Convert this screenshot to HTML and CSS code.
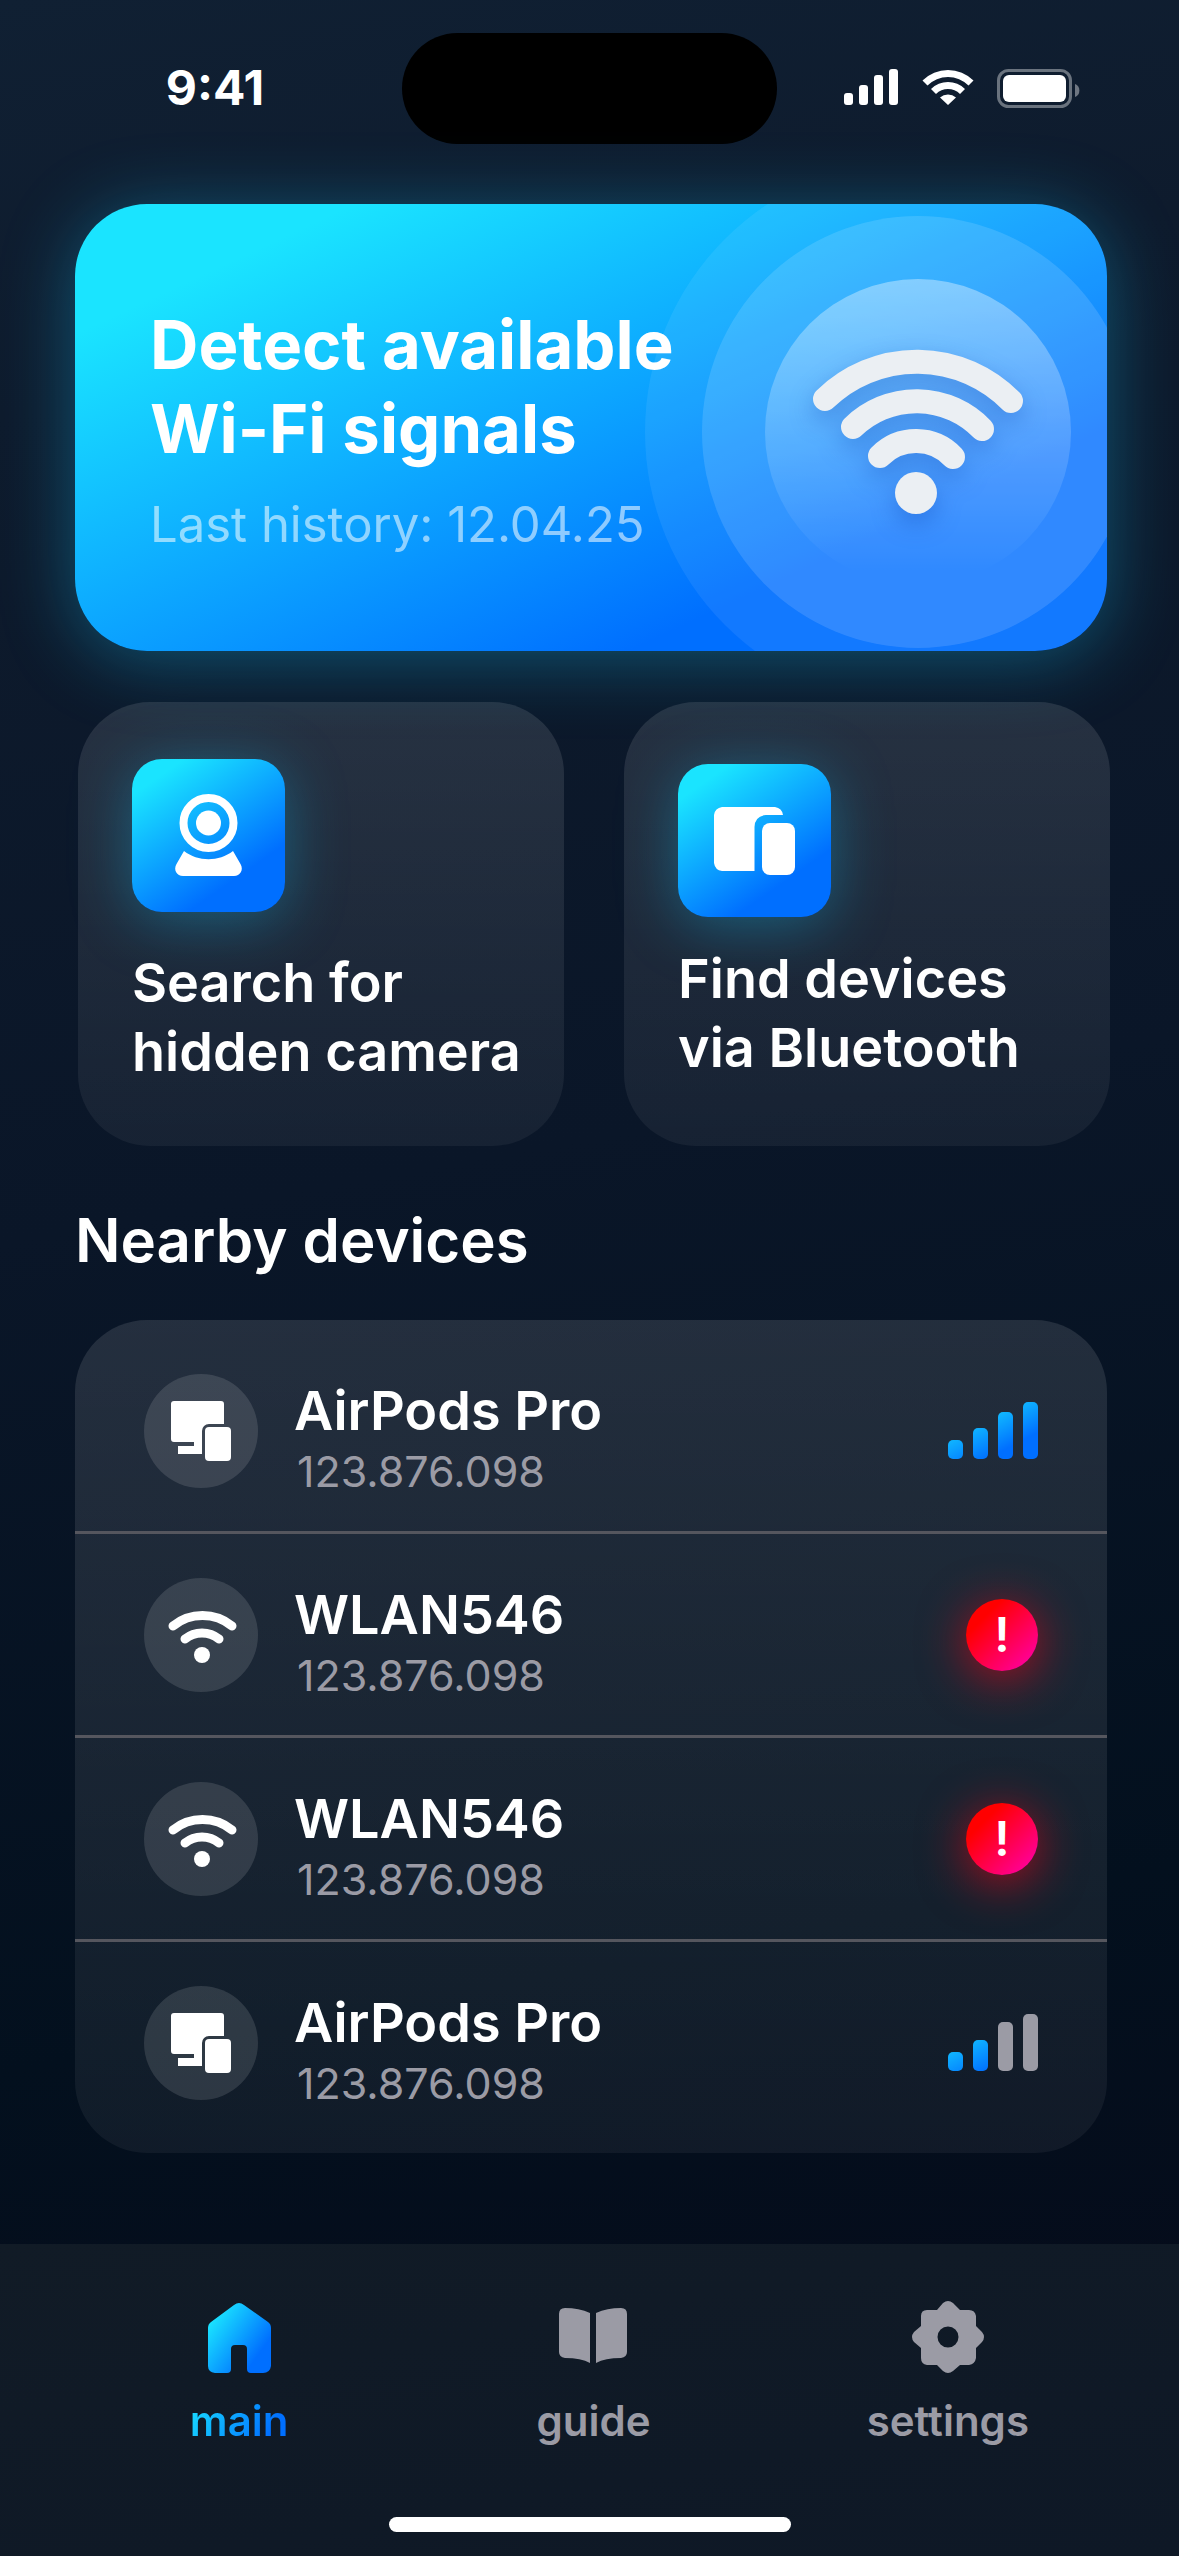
FILE: index.html
```
<!DOCTYPE html>
<html lang="en">
<head>
    <meta charset="UTF-8">
    <meta name="viewport" content="width=device-width, initial-scale=1.0">
    <title>Wi-Fi Detector</title>
    <link rel="stylesheet" href="styles.css">
</head>
<body>
    <!-- Shared icons -->
    <svg class="sprite" width="0" height="0" aria-hidden="true">
        <defs>
            <linearGradient id="blue" x1="0" y1="0.1" x2="1" y2="0.9">
                <stop offset="0.1" stop-color="#1ae4ff"/>
                <stop offset="0.8" stop-color="#006fff"/>
            </linearGradient>
            <linearGradient id="bars" gradientUnits="userSpaceOnUse" x1="5" y1="11" x2="31" y2="61">
                <stop offset="0" stop-color="#1ae4ff"/>
                <stop offset="1" stop-color="#006fff"/>
            </linearGradient>
        </defs>
        <symbol id="icon-devices" viewBox="0 0 114 114">
            <path d="M30 27H77a3 3 0 0 1 3 3V50H65a7 7 0 0 0-7 7V80H34V72H50V68H30a3 3 0 0 1-3-3V30a3 3 0 0 1 3-3Z"/>
            <rect x="61" y="53" width="26" height="34" rx="4"/>
        </symbol>
        <symbol id="icon-wifi" viewBox="0 0 114 114">
            <path d="M29 48A47 47 0 0 1 88 48M41 61A27 27 0 0 1 75 61" fill="none" stroke="#fff" stroke-width="9" stroke-linecap="round"/>
            <circle cx="58" cy="77" r="8"/>
        </symbol>
    </svg>

    <!-- Status bar -->
    <header class="status">
        <span class="status-time">9:41</span>
        <span class="status-island"></span>
        <svg class="status-icons" width="236" height="40" viewBox="0 0 236 40" fill="#fff" role="img" aria-label="Signal, Wi-Fi and battery">
            <rect x="0" y="24" width="9" height="12" rx="3"/>
            <rect x="15" y="16" width="9" height="20" rx="3"/>
            <rect x="30" y="6" width="9" height="30" rx="3"/>
            <rect x="45" y="0" width="9" height="36" rx="3"/>
            <path d="M78.500 11.500A36 36 0 0 1 129.500 11.500L124.500 16.500A29 29 0 0 0 83.500 16.500ZM87 20A24 24 0 0 1 121 20L116 25A17 17 0 0 0 92 25ZM96 28.500A12 12 0 0 1 112 28.500L104 36Z"/>
            <rect x="154.500" y="1.500" width="72" height="36" rx="10" fill="none" stroke="#fff" stroke-opacity=".38" stroke-width="3"/>
            <rect x="159" y="6" width="63" height="27" rx="6"/>
            <path d="M231 15V28A7 7 0 0 0 231 15Z" fill-opacity=".4"/>
        </svg>
    </header>

    <main>
        <!-- Wi-Fi scan -->
        <section class="hero-wrap">
            <a href="#scan" class="hero">
                <span class="hero-text">
                    <strong class="hero-title">Detect available<br>Wi-Fi signals</strong>
                    <span class="hero-sub">Last history: 12.04.25</span>
                </span>
                <span class="hero-signal">
                    <svg viewBox="0 0 306 306" aria-hidden="true">
                        <path d="M60 120A132 132 0 0 1 246 122M88 148A91 91 0 0 1 217 150M115 177A51 51 0 0 1 188 178" fill="none" stroke="#ebeff3" stroke-width="24" stroke-linecap="round"/>
                        <circle cx="151" cy="214" r="21" fill="#ebeff3"/>
                    </svg>
                </span>
            </a>
        </section>

        <!-- Tools -->
        <section class="cards">
            <a href="#camera" class="card">
                <span class="card-icon">
                    <svg viewBox="0 0 153 153" fill="#fff" aria-hidden="true">
                        <circle cx="76.500" cy="64" r="25" fill="none" stroke="#fff" stroke-width="8"/>
                        <circle cx="76.500" cy="64" r="12.500"/>
                        <path d="M52 92C66 103 87 103 101 92L108.500 105C112 111 108 117 102 117H51C45 117 41 111 44.500 105Z"/>
                    </svg>
                </span>
                <span class="card-title">Search for<br>hidden camera</span>
            </a>
            <a href="#bluetooth" class="card card-tight">
                <span class="card-icon">
                    <svg viewBox="0 0 153 153" fill="#fff" aria-hidden="true">
                        <path d="M44 43H97Q104 44 105 51H88Q77 52 76.500 63V107H44Q37 106 36 99V51Q37 44 44 43Z"/>
                        <rect x="84" y="59" width="33" height="52" rx="8"/>
                    </svg>
                </span>
                <span class="card-title">Find devices<br>via Bluetooth</span>
            </a>
        </section>

        <!-- Devices -->
        <section class="nearby">
            <h2>Nearby devices</h2>
            <ul class="list">
                <li class="row">
                    <svg class="row-icon"><use href="#icon-devices"/></svg>
                    <div class="row-text">
                        <span class="row-name">AirPods Pro</span>
                        <span class="row-ip">123.876.098</span>
                    </div>
                    <svg class="bars" viewBox="0 0 90 57" fill="url(#bars)" role="img" aria-label="Strong signal">
                        <rect x="0" y="38" width="15" height="19" rx="5"/>
                        <rect x="25" y="26" width="15" height="31" rx="5"/>
                        <rect x="50" y="10" width="15" height="47" rx="5"/>
                        <rect x="75" y="0" width="15" height="57" rx="5"/>
                    </svg>
                </li>
                <li class="row">
                    <svg class="row-icon"><use href="#icon-wifi"/></svg>
                    <div class="row-text">
                        <span class="row-name">WLAN546</span>
                        <span class="row-ip">123.876.098</span>
                    </div>
                    <span class="alert">!</span>
                </li>
                <li class="row">
                    <svg class="row-icon"><use href="#icon-wifi"/></svg>
                    <div class="row-text">
                        <span class="row-name">WLAN546</span>
                        <span class="row-ip">123.876.098</span>
                    </div>
                    <span class="alert">!</span>
                </li>
                <li class="row">
                    <svg class="row-icon"><use href="#icon-devices"/></svg>
                    <div class="row-text">
                        <span class="row-name">AirPods Pro</span>
                        <span class="row-ip">123.876.098</span>
                    </div>
                    <svg class="bars" viewBox="0 0 90 57" fill="url(#bars)" role="img" aria-label="Weak signal">
                        <rect x="0" y="38" width="15" height="19" rx="5"/>
                        <rect x="25" y="26" width="15" height="31" rx="5"/>
                        <rect x="50" y="8" width="15" height="49" rx="5" fill="#9b9ba5"/>
                        <rect x="75" y="0" width="15" height="57" rx="5" fill="#9b9ba5"/>
                    </svg>
                </li>
            </ul>
        </section>
    </main>

    <!-- Bottom navigation -->
    <nav class="nav">
        <div class="nav-links">
            <a href="#main" class="nav-link active">
                <svg viewBox="0 0 72 72" fill="url(#blue)" aria-hidden="true">
                    <path d="M31 4Q36 0 41 4L65 21Q68 23 68 27V65Q67 72 60 72H48Q44 72 44 68V48Q44 44 40 44H32Q28 44 28 48V68Q28 72 24 72H12Q5 71 5 65V27Q5 23 8 21Z"/>
                </svg>
                <span>main</span>
            </a>
            <a href="#guide" class="nav-link">
                <svg viewBox="0 0 72 72" fill="currentColor" aria-hidden="true">
                    <path d="M8 7Q22 7 33 12V62Q24 57 8 57Q2 56 2 51V13Q2 7 8 7ZM64 7Q50 7 39 12V62Q48 57 64 57Q70 56 70 51V13Q70 7 64 7Z"/>
                </svg>
                <span>guide</span>
            </a>
            <a href="#settings" class="nav-link">
                <svg viewBox="0 0 72 72" fill="currentColor" aria-hidden="true">
                    <path fill-rule="evenodd" d="M31 2Q36-2 41 2L48 9H57Q63 9 64 15V25L70 31Q74 36 70 41L64 47V57Q63 63 57 64H48L41 70Q36 74 31 70L25 64H15Q9 63 9 57V47L2 41Q-2 36 2 31L9 25V15Q9 9 15 9H25ZM36 25.500A10.500 10.500 0 1 0 36 46.500A10.500 10.500 0 1 0 36 25.500Z"/>
                </svg>
                <span>settings</span>
            </a>
        </div>
        <span class="home-bar"></span>
    </nav>
</body>
</html>
```
FILE: styles.css
```
body {
    font-family: Inter, "Liberation Sans", sans-serif;
    margin: 0;
    min-height: 100vh;
    display: flex;
    flex-direction: column;
    color: #fff;
    background: linear-gradient(170deg, #102033 0%, #0e1b2d 15%, #0a1628 45%, #03101e 75%, #050c1b 90%);
}
a {
    color: inherit;
    text-decoration: none;
}
.sprite {
    position: absolute;
}

/* Status bar */
.status {
    display: grid;
    grid-template-columns: 1fr 375px 1fr;
    align-items: center;
    justify-items: center;
    padding: 33px 36px 60px;
}
.status-time {
    font-size: 48px;
    line-height: 57px;
    font-weight: 700;
    padding: 0 8px 3px 0;
}
.status-icons {
    padding-left: 4px;
}
.status-island {
    width: 100%;
    height: 111px;
    border-radius: 56px;
    background: #000;
}

/* Hero */
.hero-wrap {
    padding: 0 72px 0 75px;
}
.hero {
    position: relative;
    display: flex;
    align-items: center;
    justify-content: space-between;
    box-sizing: border-box;
    min-height: 447px;
    padding: 8px 36px 0 75px;
    overflow: hidden;
    border-radius: 72px;
    background: linear-gradient(155deg, #1ae4ff 14%, #006fff 76%);
    box-shadow: 0 8px 72px rgba(20, 200, 255, 0.35);
}
.hero-text {
    position: relative;
    z-index: 1;
    display: grid;
    gap: 24px;
    padding-bottom: 6px;
}
.hero-title {
    font-size: 67px;
    line-height: 84px;
    font-weight: 700;
}
.hero-sub {
    font-size: 49px;
    line-height: 60px;
    color: rgba(255, 255, 255, 0.55);
}
.hero-signal {
    position: relative;
    flex: none;
    width: 306px;
    height: 306px;
    border-radius: 50%;
    background: linear-gradient(rgba(255, 255, 255, 0.38), rgba(255, 255, 255, 0) 96%);
}
.hero-signal::before,
.hero-signal::after {
    content: "";
    position: absolute;
    inset: -63px;
    border-radius: 50%;
    background: rgba(255, 255, 255, 0.13);
}
.hero-signal::after {
    inset: -120px;
    background: rgba(255, 255, 255, 0.07);
}
.hero-signal svg {
    position: relative;
    z-index: 1;
    display: block;
    filter: drop-shadow(0 10px 12px rgba(20, 80, 190, 0.4));
}

/* Cards */
.cards {
    display: grid;
    grid-template-columns: 1fr 1fr;
    gap: 60px;
    padding: 51px 69px 0 78px;
}
.card {
    display: flex;
    flex-direction: column;
    justify-content: center;
    gap: 36px;
    box-sizing: border-box;
    min-height: 444px;
    padding: 0 24px 3px 54px;
    border-radius: 72px;
    background: linear-gradient(rgba(255, 255, 255, 0.11), rgba(255, 255, 255, 0.05));
}
.card-tight {
    gap: 27px;
}
.card-icon {
    width: 153px;
    height: 153px;
    border-radius: 30px;
    background: linear-gradient(145deg, #1ae4ff 14%, #006fff 74%);
    box-shadow: 0 8px 60px rgba(20, 200, 255, 0.35);
}
.card-icon svg {
    display: block;
}
.card-title {
    font-size: 54px;
    line-height: 69px;
    font-weight: 600;
    white-space: nowrap;
}

/* Device list */
.nearby {
    padding: 57px 72px 0 75px;
}
.nearby h2 {
    margin: 0 0 43px;
    font-size: 60px;
    line-height: 74px;
    font-weight: 600;
}
.list {
    margin: 0;
    padding: 10px 0;
    list-style: none;
    border-radius: 72px;
    background: linear-gradient(rgba(255, 255, 255, 0.11), rgba(255, 255, 255, 0.05));
}
.row {
    display: flex;
    align-items: center;
    gap: 36px;
    min-height: 201px;
    padding: 0 69px;
    border-bottom: 3px solid #55565e;
}
.row:last-child {
    border-bottom: none;
}
.row-icon {
    width: 114px;
    height: 114px;
    border-radius: 50%;
    background: rgba(255, 255, 255, 0.12);
    fill: #fff;
}
.row-text {
    flex: 1;
    display: grid;
    padding-top: 14px;
}
.row-name {
    font-size: 54px;
    line-height: 66px;
    font-weight: 600;
}
.row-ip {
    padding-left: 3px;
    font-size: 43px;
    line-height: 54px;
    color: #9b9ba5;
}
.bars {
    width: 90px;
    height: 57px;
}
.alert {
    width: 72px;
    height: 72px;
    border-radius: 50%;
    background: linear-gradient(135deg, #ff0000 25%, #ff0090 85%);
    box-shadow: 0 8px 48px rgba(255, 0, 20, 0.65);
    font-size: 48px;
    line-height: 72px;
    font-weight: 600;
    text-align: center;
}

/* Bottom navigation */
.nav {
    display: flex;
    flex-direction: column;
    justify-content: space-between;
    align-items: center;
    min-height: 231px;
    margin-top: auto;
    padding: 57px 0 24px;
    background: linear-gradient(170deg, #111b26, #0e1826);
}
.nav-links {
    width: 100%;
    display: grid;
    grid-template-columns: repeat(3, 1fr);
    box-sizing: border-box;
    padding: 0 54px 0 62px;
}
.nav-link {
    display: flex;
    flex-direction: column;
    align-items: center;
    gap: 21px;
    color: #9b9ba5;
    font-size: 42px;
    line-height: 54px;
    font-weight: 600;
}
.nav-link svg {
    width: 72px;
    height: 72px;
}
.nav-link.active span {
    background: linear-gradient(120deg, #1ae4ff, #006fff 80%);
    background-clip: text;
    -webkit-background-clip: text;
    color: transparent;
}
.home-bar {
    width: 402px;
    height: 15px;
    border-radius: 8px;
    background: #fff;
}
```
